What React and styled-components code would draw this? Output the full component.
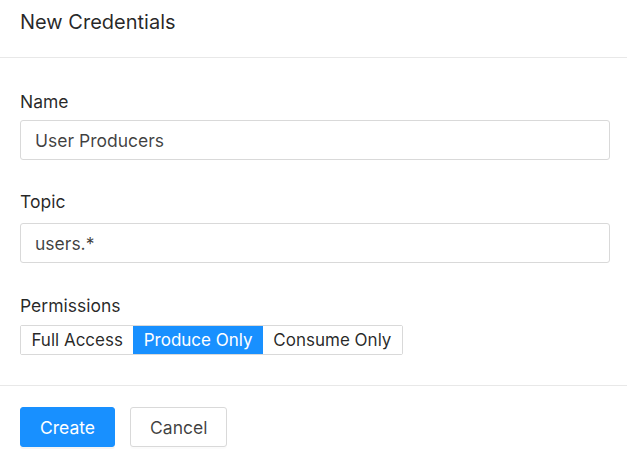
import React, { useState } from "react";
import styled, { createGlobalStyle } from "styled-components";

const GlobalStyle = createGlobalStyle`
  body {
    margin: 0;
    background: #fff;
    font-family: Inter, "Noto Sans", sans-serif;
    color: rgba(0, 0, 0, 0.85);
  }
`;

const Modal = styled.div`
  width: 627px;
  background: #fff;
`;

const Header = styled.div`
  height: 58px;
  padding: 9px 20px 0;
  box-sizing: border-box;
  border-bottom: 1px solid #e8e8e8;
`;

const Title = styled.div`
  font-size: 20px;
  line-height: 27px;
  font-weight: 400;
  color: rgba(0, 0, 0, 0.85);
`;

const Body = styled.div`
  padding: 32px 17px 30px 20px;
  border-bottom: 1px solid #e8e8e8;
  display: flex;
  flex-direction: column;
`;

const Field = styled.div`
  display: flex;
  flex-direction: column;
  gap: ${(p) => p.gap}px;
  margin-top: ${(p) => p.top || 0}px;
`;

const Label = styled.label`
  font-size: 17.5px;
  line-height: 24px;
  color: rgba(0, 0, 0, 0.85);
`;

const Input = styled.input`
  height: 40px;
  box-sizing: border-box;
  border: 1px solid #d9d9d9;
  border-radius: 3px;
  padding: 0 14px;
  font-family: inherit;
  font-size: 17.5px;
  color: rgba(0, 0, 0, 0.75);
  outline: none;
`;

const Segmented = styled.div`
  display: flex;
  align-self: flex-start;
  border: 1px solid #d9d9d9;
  border-radius: 2px;
  height: 30px;
  box-sizing: border-box;
`;

const Segment = styled.button`
  border: none;
  margin: 0;
  padding: 0 10.4px;
  height: 28px;
  font-family: inherit;
  font-size: 17px;
  cursor: pointer;
  background: ${(p) => (p.active ? "#1890ff" : "#fff")};
  color: ${(p) => (p.active ? "#fff" : "rgba(0, 0, 0, 0.85)")};
`;

const Footer = styled.div`
  padding: 21px 20px;
  display: flex;
  gap: 15px;
`;

const Button = styled.button`
  height: 40px;
  padding: 0 19px;
  border-radius: 3px;
  font-family: inherit;
  font-size: 17.5px;
  cursor: pointer;
  border: 1px solid ${(p) => (p.primary ? "#1890ff" : "#d9d9d9")};
  background: ${(p) => (p.primary ? "#1890ff" : "#fff")};
  color: ${(p) => (p.primary ? "#fff" : "rgba(0, 0, 0, 0.75)")};
  box-shadow: ${(p) => (p.primary ? "0 2px 0 rgba(0, 0, 0, 0.045)" : "0 2px 0 rgba(0, 0, 0, 0.015)")};
`;

const permissions = ["Full Access", "Produce Only", "Consume Only"];

export default function App() {
  const [perm, setPerm] = useState("Produce Only");
  return (
    <>
      <GlobalStyle />
      <Modal>
        <Header>
          <Title>New Credentials</Title>
        </Header>
        <Body>
          <Field gap={6}>
            <Label>Name</Label>
            <Input defaultValue="User Producers" />
          </Field>
          <Field gap={9} top={30}>
            <Label>Topic</Label>
            <Input defaultValue="users.*" />
          </Field>
          <Field gap={7} top={31}>
            <Label>Permissions</Label>
            <Segmented>
              {permissions.map((p) => (
                <Segment key={p} active={perm === p} onClick={() => setPerm(p)}>
                  {p}
                </Segment>
              ))}
            </Segmented>
          </Field>
        </Body>
        <Footer>
          <Button primary>Create</Button>
          <Button>Cancel</Button>
        </Footer>
      </Modal>
    </>
  );
}
